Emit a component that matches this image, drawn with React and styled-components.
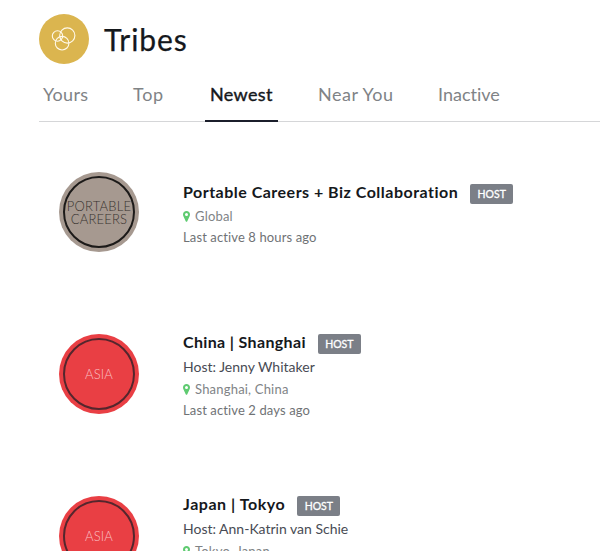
import { createGlobalStyle, styled } from "styled-components"

const tabs = [
    { label: "Yours", width: 55, spacing: 0.3 },
    { label: "Top", width: 42, spacing: 0.7 },
    { label: "Newest", width: 73, spacing: 0.35, active: true },
    { label: "Near You", width: 85, spacing: 0.5 },
    { label: "Inactive", width: 72, spacing: 0 },
]

const tribes = [
    {
        name: "Portable Careers + Biz Collaboration",
        spacing: 0.49,
        badgeLines: ["PORTABLE", "CAREERS"],
        place: "Global",
        active: "Last active 8 hours ago",
    },
    {
        name: "China | Shanghai",
        spacing: 0.35,
        badgeLines: ["ASIA"],
        red: true,
        host: "Jenny Whitaker",
        place: "Shanghai, China",
        active: "Last active 2 days ago",
    },
    {
        name: "Japan | Tokyo",
        spacing: 0.55,
        badgeLines: ["ASIA"],
        red: true,
        host: "Ann-Katrin van Schie",
        place: "Tokyo, Japan",
    },
]

const TribesIcon = () => (
    <svg width="50" height="50" viewBox="0 0 50 50" fill="none" stroke="#FFF9EA" strokeWidth="1.1">
        <circle cx="28.3" cy="21.5" r="7.6" />
        <circle cx="18.5" cy="22" r="5.2" />
        <circle cx="23.1" cy="29.2" r="6.8" />
    </svg>
)

const PinIcon = () => (
    <svg width="7" height="11" viewBox="0 0 7 11">
        <path
            fill="#5FCB71"
            fillRule="evenodd"
            d="M3.5 0C1.5 0 0 1.5 0 3.5c0 .6.1 1 .3 1.5l2.4 5.2c.3.7 1.3.7 1.6 0L6.7 5c.2-.5.3-.9.3-1.5C7 1.500 5.500 0 3.500 0Zm0 2a1.500 1.500 0 1 1 0 3 1.500 1.500 0 0 1 0-3Z"
        />
    </svg>
)

const Tribe = ({ tribe }) => (
    <TribeRow>
        <Avatar $red={tribe.red}>
            <Ring $red={tribe.red}>
                {tribe.badgeLines.map((line) => (
                    <AvatarText key={line} $red={tribe.red}>{line}</AvatarText>
                ))}
            </Ring>
        </Avatar>
        <Details $hosted={Boolean(tribe.host)}>
            <TitleRow>
                <TribeName $spacing={tribe.spacing}>{tribe.name}</TribeName>
                <HostBadge>HOST</HostBadge>
            </TitleRow>
            {tribe.host && <HostName>Host: {tribe.host}</HostName>}
            <Place>
                <PinIcon />
                {tribe.place}
            </Place>
            {tribe.active && <LastActive>{tribe.active}</LastActive>}
        </Details>
    </TribeRow>
)

export default function App() {
    return (
        <>
            <GlobalStyle />
            <Page>
                <Header>
                    <Logo>
                        <TribesIcon />
                    </Logo>
                    <Heading>Tribes</Heading>
                </Header>
                <Tabs>
                    {tabs.map((tab) => (
                        <Tab key={tab.label} $active={tab.active} $width={tab.width} $spacing={tab.spacing}>
                            {tab.label}
                        </Tab>
                    ))}
                </Tabs>
                <TribeList>
                    {tribes.map((tribe) => (
                        <Tribe key={tribe.name} tribe={tribe} />
                    ))}
                </TribeList>
            </Page>
        </>
    )
}

const GlobalStyle = createGlobalStyle`
    * {
        box-sizing: border-box;
    }

    body {
        margin: 0;
        background-color: #FFF;
        font-family: Lato, "Liberation Sans", sans-serif;
        font-variant-ligatures: none;
    }
`

const Page = styled.main`
    height: 551px;
    overflow: hidden;
    padding: 14px 0 0 39px;
`

const Header = styled.header`
    display: flex;
    align-items: center;
    gap: 15px;
    height: 50px;
`

const Logo = styled.div`
    width: 50px;
    height: 50px;
    border-radius: 50%;
    background-color: #DBB54F;
`

const Heading = styled.h1`
    margin: 0;
    font-size: 30px;
    line-height: 50px;
    height: 50px;
    font-weight: 400;
    letter-spacing: 0.9px;
    color: #15181C;
    -webkit-text-stroke: 0.25px #15181C;
`

const Tabs = styled.nav`
    display: flex;
    gap: 35px;
    height: 58px;
    padding-top: 18px;
    border-bottom: 1px solid #D5D6D8;
`

const Tab = styled.a`
    flex: none;
    width: ${({ $width }) => $width}px;
    height: 40px;
    padding-left: 5px;
    margin-left: -1px;
    margin-right: 1px;
    font-size: 18px;
    line-height: 24px;
    letter-spacing: ${({ $spacing }) => $spacing}px;
    white-space: nowrap;
    color: ${({ $active }) => ($active ? "#15181C" : "#808386")};
    -webkit-text-stroke: ${({ $active }) => ($active ? "0.4px #15181C" : "0")};
    border-bottom: 2px solid ${({ $active }) => ($active ? "#1B1E2B" : "transparent")};
`

const TribeList = styled.section`
    display: flex;
    flex-direction: column;
    padding: 50px 0 0 20px;
`

const TribeRow = styled.article`
    display: flex;
    gap: 44px;
    height: 162px;
    flex: none;
`

const Avatar = styled.div`
    display: flex;
    align-items: center;
    justify-content: center;
    flex: none;
    width: 80px;
    height: 80px;
    border-radius: 50%;
    background-color: ${({ $red }) => ($red ? "#E93F44" : "#A69990")};
`

const Ring = styled.div`
    display: flex;
    flex-direction: column;
    align-items: center;
    justify-content: center;
    width: 72px;
    height: 72px;
    padding-top: 1px;
    border-radius: 50%;
    border: 2px solid ${({ $red }) => ($red ? "#54262D" : "#1C1A19")};
`

const AvatarText = styled.span`
    font-size: 13px;
    line-height: 13px;
    font-weight: 300;
    letter-spacing: 0.2px;
    color: ${({ $red }) => ($red ? "#F9BFC1" : "#38332F")};
`

const Details = styled.div`
    padding-top: ${({ $hosted }) => ($hosted ? 0 : 12)}px;
`

const TitleRow = styled.div`
    display: flex;
    gap: 12px;
    height: 22px;
`

const TribeName = styled.h2`
    margin: 0;
    font-size: 16px;
    line-height: 15px;
    font-weight: 700;
    letter-spacing: ${({ $spacing }) => $spacing}px;
    color: #15181C;
`

const HostBadge = styled.span`
    display: flex;
    align-items: center;
    justify-content: center;
    width: 43px;
    height: 20px;
    border-radius: 2px;
    background-color: #7B7F87;
    font-size: 10.5px;
    font-weight: 400;
    -webkit-text-stroke: 0.3px #FFF;
    color: #FFF;
`

const HostName = styled.div`
    height: 23px;
    font-size: 14px;
    line-height: 22px;
    color: #484B54;
`

const Place = styled.div`
    display: flex;
    align-items: center;
    gap: 5px;
    height: 20px;
    font-size: 13px;
    letter-spacing: 0.2px;
    color: #808386;
`

const LastActive = styled.div`
    font-size: 13px;
    line-height: 22px;
    letter-spacing: 0.12px;
    color: #6F7275;
`
